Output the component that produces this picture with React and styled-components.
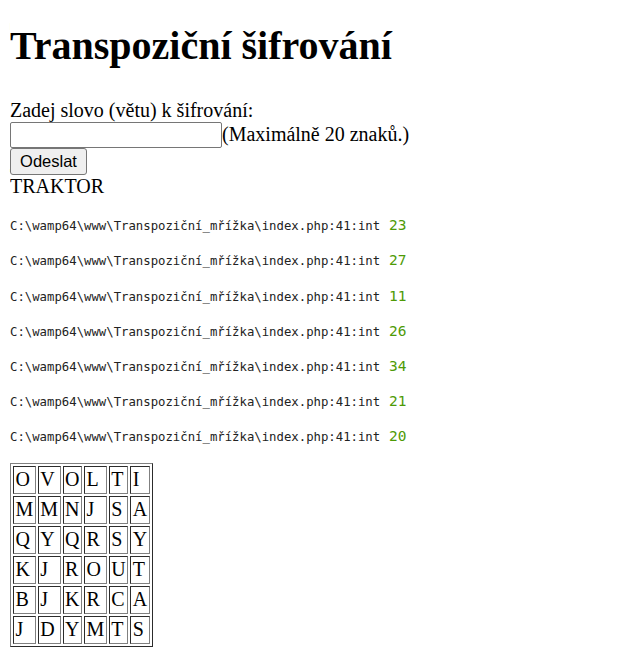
import React from "react";
import styled, { createGlobalStyle } from "styled-components";

const GlobalStyle = createGlobalStyle`
  body {
    margin: 10px;
    background: #fff;
    color: #000;
    font-family: "Liberation Serif", "Times New Roman", serif;
    font-size: 20px;
    line-height: 23px;
  }
`;

const Title = styled.h1`
  font-size: 40px;
  line-height: 46px;
  font-weight: bold;
  margin: 13px 0 30px;
`;

const Form = styled.form`
  margin: 0;
`;

const TextInput = styled.input`
  box-sizing: border-box;
  width: 212px;
  height: 26px;
  margin: 0;
  padding: 1px 3px;
  font-family: "Liberation Sans", Arial, sans-serif;
  font-size: 16.5px;
  border: 1px solid #767676;
  border-radius: 2px;
  vertical-align: baseline;
`;

const SubmitButton = styled.button`
  box-sizing: border-box;
  width: 77px;
  height: 27px;
  margin: 0;
  padding: 0 8px;
  font-family: "Liberation Sans", Arial, sans-serif;
  font-size: 16.5px;
  color: #000;
  background: #efefef;
  border: 1px solid #767676;
  border-radius: 3px;
`;

const Word = styled.div`
  line-height: 23px;
  padding-bottom: 2px;
`;

const Dump = styled.pre`
  height: 19px;
  font-family: "DejaVu Sans Mono", "Liberation Mono", monospace;
  font-size: 14.5px;
  line-height: 19px;
  color: #222;
  margin: 16.2px 0;
`;

const Path = styled.small`
  font-size: 12.3px;
`;

const Num = styled.span`
  color: #4e9a06;
`;

const Grid = styled.table`
  border: 1px outset #808080;
  border-spacing: 2.5px;
`;

const Cell = styled.td`
  border: 1px inset #808080;
  padding: 1.5px;
  line-height: 23px;
`;

const values = [23, 27, 11, 26, 34, 21, 20];
const rows = ["OVOLTI", "MMNJSA", "QYQRSY", "KJROUT", "BJKRCA", "JDYMTS"];

export default function App() {
  return (
    <>
      <GlobalStyle />
      <Title>Transpoziční šifrování</Title>
      <Form onSubmit={(e) => e.preventDefault()}>
        Zadej slovo (větu) k šifrování:
        <br />
        <TextInput type="text" maxLength={20} />
        (Maximálně 20 znaků.)
        <br />
        <SubmitButton type="submit">Odeslat</SubmitButton>
      </Form>
      <Word>TRAKTOR</Word>
      {values.map((v, i) => (
        <Dump key={i}>
          <Path>C:\wamp64\www\Transpoziční_mřížka\index.php:41:</Path>
          <Path>int</Path> <Num>{v}</Num>
        </Dump>
      ))}
      <Grid>
        <tbody>
          {rows.map((r, i) => (
            <tr key={i}>
              {r.split("").map((c, j) => (
                <Cell key={j}>{c}</Cell>
              ))}
            </tr>
          ))}
        </tbody>
      </Grid>
    </>
  );
}
